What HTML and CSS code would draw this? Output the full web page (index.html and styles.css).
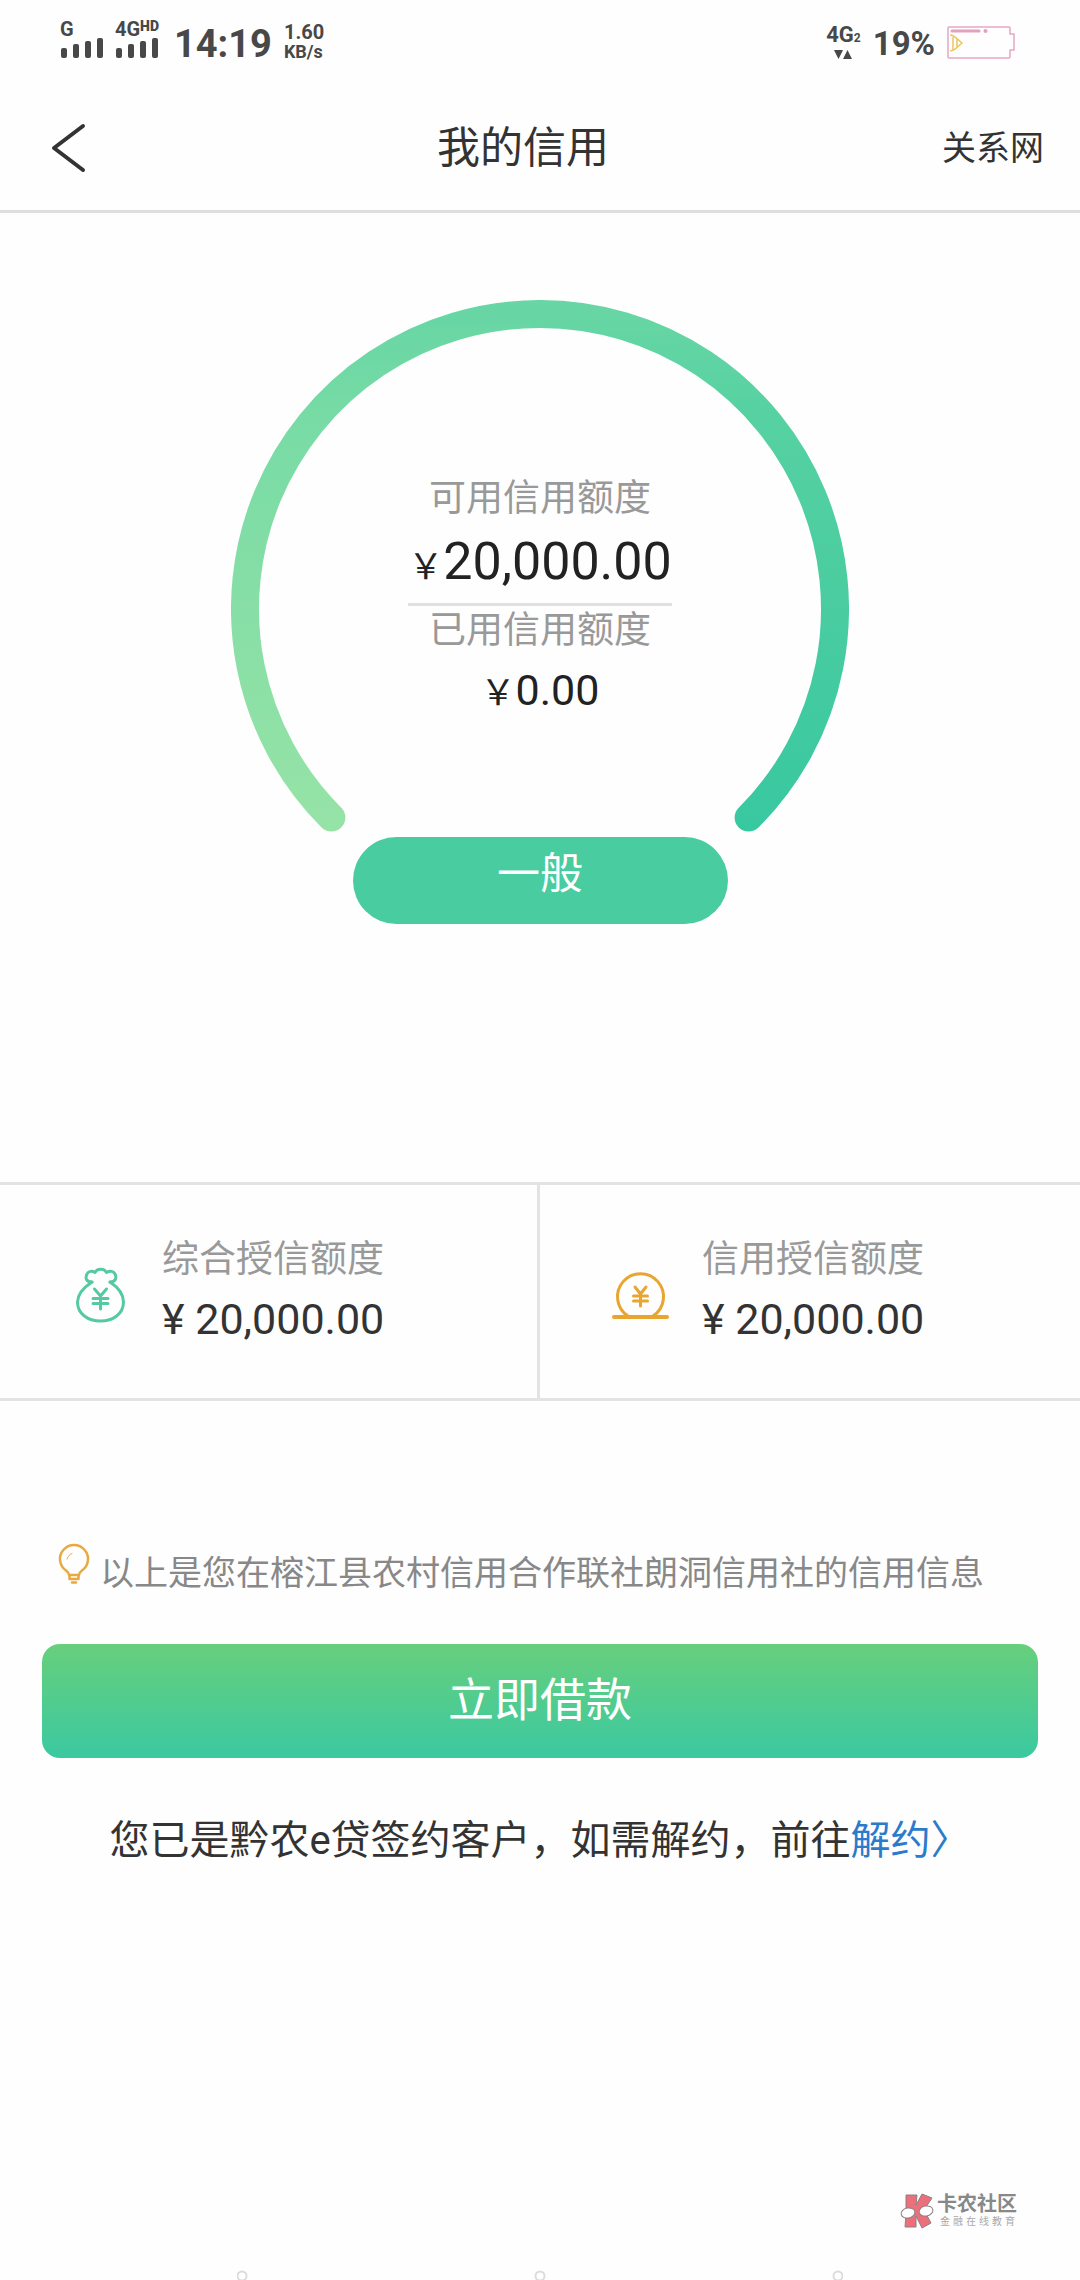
FILE: index.html
```html
<!DOCTYPE html>
<html lang="zh-CN">
<head>
<meta charset="utf-8">
<meta name="viewport" content="width=device-width, initial-scale=1">
<title>我的信用</title>
<link rel="stylesheet" href="styles.css">
</head>
<body>
<div class="status">
  <div class="signal">
    <span class="net">G</span>
    <svg width="44" height="20" viewBox="0 0 44 20" aria-hidden="true"><rect x="1" y="10" width="6" height="10" rx="2"/><rect x="13" y="6" width="6" height="14" rx="2"/><rect x="25" y="3" width="6" height="17" rx="2"/><rect x="37" y="0" width="6" height="20" rx="2"/></svg>
  </div>
  <div class="signal">
    <span class="net">4G<b class="hd">HD</b></span>
    <svg width="44" height="20" viewBox="0 0 44 20" aria-hidden="true"><rect x="1" y="10" width="6" height="10" rx="2"/><rect x="13" y="6" width="6" height="14" rx="2"/><rect x="25" y="3" width="6" height="17" rx="2"/><rect x="37" y="0" width="6" height="20" rx="2"/></svg>
  </div>
  <time class="clock">14:19</time>
  <div class="speed"><span class="rate">1.60</span><span class="unit">KB/s</span></div>
  <div class="data">
    <span class="gen">4G<small class="sim">2</small></span>
    <svg width="18" height="9" viewBox="0 0 18 9" aria-hidden="true"><path d="M0 0h9L4.500 9zM9 9h9L13.500 0z"/></svg>
  </div>
  <span class="percent">19%</span>
  <svg class="battery" width="69" height="33" viewBox="0 0 69 33" fill="none" aria-hidden="true">
    <path d="M2 1h60a1 1 0 0 1 1 1v6h4v16h-4v7a1 1 0 0 1-1 1H2a1 1 0 0 1-1-1V2a1 1 0 0 1 1-1z" stroke="#e6a6c4" stroke-width="1.500"/>
    <path d="M5 5h27" stroke="#e3a0bd" stroke-width="3" stroke-linecap="round"/><circle cx="38.500" cy="5" r="2" fill="#e3a0bd"/>
    <path d="M3 9c5 0 8 5 12 8-4 3-7 8-12 8M6 11v13M10 13v9" stroke="#ecc65c" stroke-width="1.500"/>
  </svg>
</div>

<header class="bar">
  <button class="back" type="button" aria-label="返回"><svg width="36" height="50" viewBox="0 0 36 50" fill="none" aria-hidden="true"><path d="M33 3 4 25 33 47" stroke="#333" stroke-width="4" stroke-linecap="round" stroke-linejoin="round"/></svg></button>
  <h1 class="title">我的信用</h1>
  <a class="more" href="#network">关系网</a>
</header>

<main class="content">
  <section class="gauge">
    <svg class="ring" viewBox="0 0 618 533" fill="none" stroke-width="28" stroke-linecap="round" aria-hidden="true">
      <defs>
        <linearGradient id="rise" gradientUnits="userSpaceOnUse" x1="0" y1="532" x2="0" y2="14"><stop offset="0" stop-color="#96e3a6"/><stop offset=".4" stop-color="#88dfa6"/><stop offset=".8" stop-color="#78dba5"/><stop offset="1" stop-color="#67d6a4"/></linearGradient>
        <linearGradient id="fall" gradientUnits="userSpaceOnUse" x1="0" y1="14" x2="0" y2="532"><stop offset="0" stop-color="#67d6a4"/><stop offset=".2" stop-color="#56d1a2"/><stop offset=".6" stop-color="#48cca0"/><stop offset="1" stop-color="#38c8a0"/></linearGradient>
      </defs>
      <path d="M100.400 517.600A295 295 0 0 1 309 14" stroke="url(#rise)"/>
      <path d="M309 14A295 295 0 0 1 517.600 517.600" stroke="url(#fall)"/>
    </svg>
    <div class="figures">
      <span class="label">可用信用额度</span>
      <strong class="amount large"><span class="yen">￥</span>20,000.00</strong>
      <hr class="rule">
      <span class="label">已用信用额度</span>
      <strong class="amount"><span class="yen">￥</span>0.00</strong>
    </div>
    <span class="level">一般</span>
  </section>

  <section class="limits">
    <div class="limit">
      <svg width="60" height="60" viewBox="0 0 60 60" fill="none" stroke="#55c9a2" stroke-width="3" stroke-linecap="round" stroke-linejoin="round" aria-hidden="true">
        <path d="M22 19C13 25 7.500 32 7.500 39C7.500 51 18 58 30.500 58S53.500 51 53.500 39C53.500 32 49 25 40 19"/>
        <path d="M22 19c-6 0-7-4-5-8 1.500-3 5-3.500 8-1.500 2-4.500 9.500-4.500 11.500 0 3.500-2 7-1.500 8.500 1.500 2 4 .5 8-5 8"/>
        <path d="M24.500 26l6 7 6-7M30.500 33v13M23 35.500h15M23 40.500h15"/>
      </svg>
      <div class="pair"><span class="label">综合授信额度</span><strong class="amount">¥ 20,000.00</strong></div>
    </div>
    <div class="limit">
      <svg width="60" height="60" viewBox="0 0 60 60" fill="none" stroke="#e8a52f" stroke-width="3" stroke-linecap="round" stroke-linejoin="round" aria-hidden="true">
        <path d="M18 53A23 23 0 1 1 43 53"/><path d="M4 54h53" stroke-width="4"/>
        <path d="M25 24l5.500 7 5.500-7M30.500 31v12M23.500 33h14M23.500 38h14"/>
      </svg>
      <div class="pair"><span class="label">信用授信额度</span><strong class="amount">¥ 20,000.00</strong></div>
    </div>
  </section>

  <section class="actions">
    <p class="tip">
      <svg width="32" height="40" viewBox="0 0 32 40" fill="none" stroke="#e8a940" stroke-width="2.500" stroke-linecap="round" stroke-linejoin="round" aria-hidden="true">
        <path d="M11 29c0-2-1-3-3-4.500A14 14 0 1 1 24 24.500C22 26 21 27 21 29z" transform="translate(0 1)"/><path d="M11.500 31v3h9v-3M14 37.500h4"/><path d="M9 14c1-3 3-5 5-5.500" stroke-width="1"/>
      </svg>
      以上是您在榕江县农村信用合作联社朗洞信用社的信用信息
    </p>
    <button class="borrow" type="button">立即借款</button>
    <p class="note">您已是黔农e贷签约客户，如需解约，前往<a href="#cancel">解约〉</a></p>
  </section>
</main>

<footer class="foot">
  <div class="brand">
    <svg width="34" height="36" viewBox="0 0 34 36" stroke="#8c8080" aria-hidden="true">
      <path d="M6 2h11l-1 10 6-11 10 4-8 12 7 13-9 5-6-12v11H5l1-13z" fill="#ec6f7c"/>
      <ellipse cx="8" cy="20" rx="7" ry="5" fill="#fff" transform="rotate(-12 8 20)"/><ellipse cx="26" cy="18" rx="7" ry="5" fill="#fff" transform="rotate(-12 26 18)"/>
    </svg>
    <div class="words"><b class="name">卡农社区</b><span class="motto">金融在线教育</span></div>
  </div>
  <svg class="dots" width="606" height="10" viewBox="0 0 606 10" fill="none" stroke="#dcdcdc" stroke-width="2" aria-hidden="true"><circle cx="5" cy="6" r="4.500"/><circle cx="303" cy="6" r="4.500"/><circle cx="601" cy="6" r="4.500"/></svg>
</footer>
</body>
</html>
```
FILE: styles.css
```css
* { box-sizing: border-box; }

body {
  margin: 0;
  min-height: 100vh;
  display: flex;
  flex-direction: column;
  background: #fefefe;
  color: #333;
  font-family: Roboto, "Noto Sans CJK SC", sans-serif;
}

svg { display: block; flex: none; }
h1, p, hr { margin: 0; }
h1, strong { font-weight: 400; }
button { border: 0; font-family: inherit; cursor: pointer; }
a { text-decoration: none; }

/* Phone status bar */
.status {
  height: 80px;
  padding: 4px 64px 0 60px;
  display: flex;
  align-items: center;
  color: #484848;
  fill: #484848;
  font-weight: 700;
}
.signal { display: flex; flex-direction: column; width: 55px; gap: 1px; padding-bottom: 6px; }
.net { display: flex; font-size: 20px; line-height: 16px; }
.hd { font-size: 14px; line-height: 10px; }
.clock { margin-left: 4px; font-size: 38px; line-height: 46px; padding-top: 4px; }
.speed { margin-left: 12px; display: flex; flex-direction: column; }
.rate { font-size: 20px; line-height: 20px; }
.unit { font-size: 18px; line-height: 20px; }
.data { margin-left: auto; display: flex; flex-direction: column; align-items: center; gap: 2px; }
.gen { font-size: 22px; line-height: 20px; }
.sim { font-size: 12px; }
.percent { margin: 4px 12px 0; font-size: 33px; line-height: 40px; }

/* Title bar */
.bar {
  height: 133px;
  padding: 6px 36px 0 50px;
  display: flex;
  align-items: center;
  justify-content: space-between;
  border-bottom: 3px solid #dedede;
}
.back { width: 54px; padding: 0; background: none; }
.title { font-size: 43px; line-height: 64px; }
.more { color: #333; font-size: 34px; line-height: 52px; }

/* Credit gauge */
.gauge {
  padding: 87px 0 258px;
  display: grid;
  grid-template-columns: 618px;
  justify-content: center;
}
.ring { grid-area: 1 / 1; width: 100%; }
.figures {
  grid-area: 1 / 1;
  padding-top: 174px;
  display: flex;
  flex-direction: column;
  align-items: center;
}
.label { color: #999; font-size: 37px; line-height: 50px; }
.amount { font-size: 43px; line-height: 68px; }
.figures .amount { color: #222; }
.figures .large { font-size: 52px; line-height: 76px; }
.yen { font-size: 35px; line-height: 1; }
.rule { width: 264px; height: 3px; margin-top: 3px; border: 0; background: #e0e0e0; }
.level {
  justify-self: center;
  width: 375px;
  height: 87px;
  margin-top: 4px;
  border-radius: 44px;
  background: #48cca0;
  color: #fff;
  font-size: 43px;
  line-height: 74px;
  text-align: center;
}

/* Credit limits */
.limits {
  display: grid;
  grid-template-columns: 1fr 1fr;
  border-top: 3px solid #e3e3e3;
  border-bottom: 3px solid #e3e3e3;
}
.limit { display: flex; align-items: center; gap: 32px; height: 213px; padding: 2px 0 0 70px; }
.limit:first-child { border-right: 3px solid #e3e3e3; }
.pair { display: flex; flex-direction: column; padding-top: 2px; }

/* Actions */
.actions { padding: 136px 42px 0; text-align: center; }
.tip {
  display: flex;
  gap: 10px;
  padding: 2px 0 0 16px;
  color: #888;
  font-size: 34px;
  line-height: 68px;
}
.tip svg { margin-top: 6px; overflow: visible; }
.borrow {
  width: 100%;
  height: 114px;
  margin-top: 37px;
  padding: 0 0 10px;
  border-radius: 18px;
  background: linear-gradient(#67cf7c, #3bc9a1);
  color: #fff;
  font-size: 46px;
}
.note { margin-top: 53px; font-size: 40px; line-height: 60px; }
.note a { color: #2b7bcd; }

/* Footer */
.foot { margin-top: auto; display: flex; flex-direction: column; align-items: center; }
.brand { align-self: flex-end; display: flex; gap: 3px; margin: 0 62px 41px 0; }
.words { display: flex; flex-direction: column; color: #888; }
.name { font-size: 20px; line-height: 22px; }
.motto { padding-left: 3px; font-size: 10px; line-height: 14px; letter-spacing: 3px; color: #aaa; }
```
